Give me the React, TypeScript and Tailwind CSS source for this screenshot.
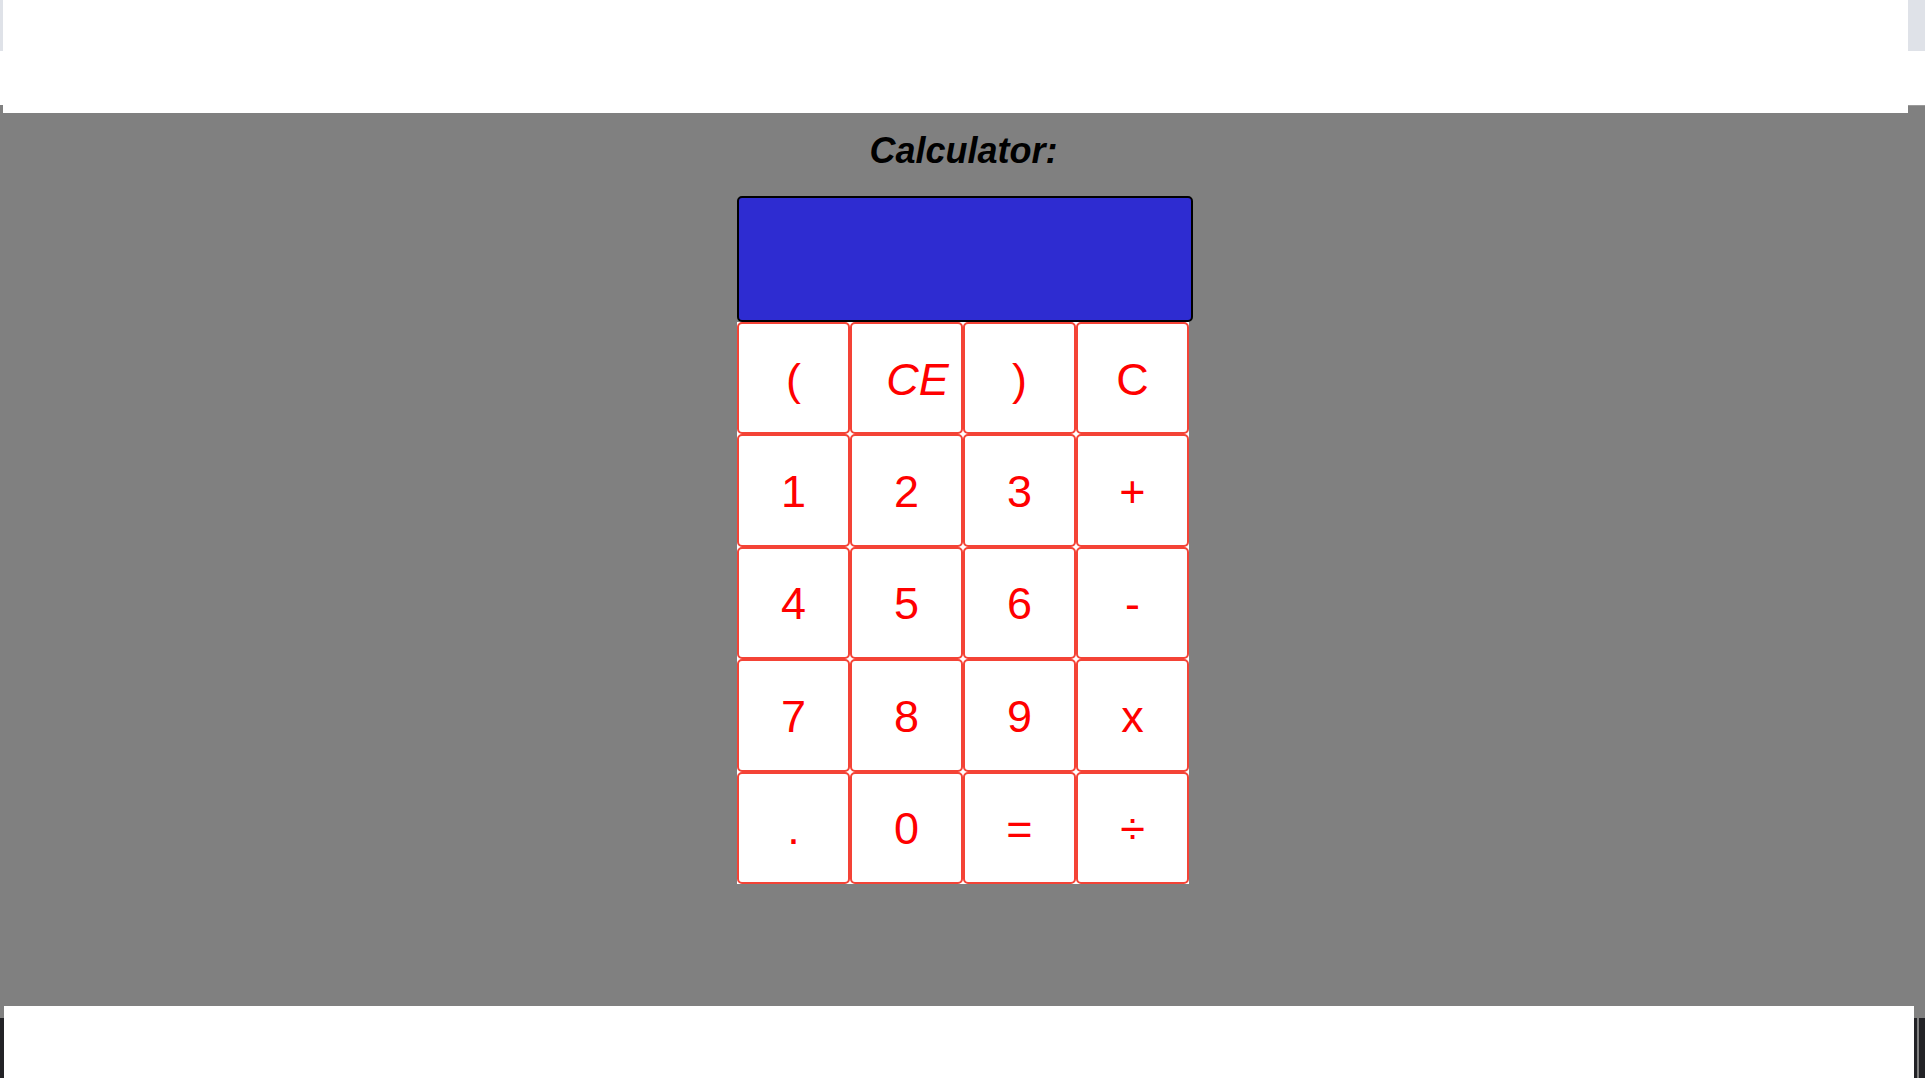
import React from "react";

const keys: string[] = ["(", "CE", ")", "C", "1", "2", "3", "+", "4", "5", "6", "-", "7", "8", "9", "x", ".", "0", "=", "÷"];

export default function App() {
  return (
    <div className="w-[1925px] h-[1078px] flex flex-col overflow-hidden" style={{ fontFamily: '"Liberation Sans", Arial, sans-serif' }}>
      <div className="h-[113px] flex">
        <div className="w-[3px] flex flex-col">
          <div className="h-[51px] bg-[#dfe2e8]" />
          <div className="h-[54px] bg-white" />
          <div className="flex-1 bg-[#808080]" />
        </div>
        <div className="flex-1 bg-white" />
        <div className="w-[17px] flex flex-col">
          <div className="h-[51px] bg-[#dfe2e8]" />
          <div className="h-[54px] bg-white" />
          <div className="h-[1px] bg-[#9a9a9a]" />
          <div className="flex-1 bg-[#808080]" />
        </div>
      </div>
      <div className="flex-1 bg-[#808080] flex flex-col items-center pt-[17px]">
        <h1 className="text-[36px] leading-[41px] font-bold italic text-black pl-[2px]">Calculator:</h1>
        <div className="flex justify-center pl-[5px] mt-[25px]">
          <div className="w-[456px] flex flex-col">
            <div className="h-[126px] w-[456px] bg-[#2e2cd1] border-2 border-black rounded-[5px]" />
            <div className="w-[452px] h-[562px] grid grid-cols-4 grid-rows-5 bg-white">
              {keys.map((k) => (
                <button
                  key={k}
                  className={`flex items-center justify-center bg-white border-2 border-[#f44336] rounded-[5px] pt-[2px] text-[45px] leading-none text-[#ff0000] ${k === "CE" ? "italic pl-[22px]" : ""}`}
                >
                  {k}
                </button>
              ))}
            </div>
          </div>
        </div>
      </div>
      <div className="h-[72px] flex">
        <div className="w-[4px] flex flex-col">
          <div className="h-[12px] bg-[#808080]" />
          <div className="flex-1 bg-[#222226]" />
        </div>
        <div className="flex-1 bg-white" />
        <div className="w-[11px] flex flex-col">
          <div className="h-[12px] bg-[#808080]" />
          <div className="flex-1 flex">
            <div className="w-[3px] bg-[#222226]" />
            <div className="w-[2px] bg-[#808080]" />
            <div className="flex-1 bg-[#222226]" />
          </div>
        </div>
      </div>
    </div>
  );
}
